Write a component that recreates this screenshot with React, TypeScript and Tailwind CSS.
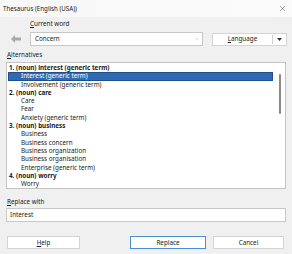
import { X, ChevronDown } from "lucide-react";

type Row = { text: string; head?: boolean; selected?: boolean };

const rows: Row[] = [
  { text: "1. (noun) interest (generic term)", head: true },
  { text: "Interest (generic term)", selected: true },
  { text: "Involvement (generic term)" },
  { text: "2. (noun) care", head: true },
  { text: "Care" },
  { text: "Fear" },
  { text: "Anxiety (generic term)" },
  { text: "3. (noun) business", head: true },
  { text: "Business" },
  { text: "Business concern" },
  { text: "Business organization" },
  { text: "Business organisation" },
  { text: "Enterprise (generic term)" },
  { text: "4. (noun) worry", head: true },
  { text: "Worry" },
];

const Underlined = ({ first, rest }: { first: string; rest: string }) => (
  <span>
    <span className="underline underline-offset-1">{first}</span>
    {rest}
  </span>
);

const App = () => {
  return (
    <div
      className="w-[292px] h-[254px] bg-[#f0f0f0] text-[#1a1a1a] text-[6.3px] leading-[8px] overflow-hidden"
      style={{ fontFamily: '"Noto Sans", "Open Sans", sans-serif' }}
    >
      {/* title bar */}
      <div className="h-[17px] flex items-center justify-between pl-[3px] pr-[5px] bg-gradient-to-r from-[#f7f7f7] to-[#fbfbfb]">
        <span className="text-[6.2px]">Thesaurus (English (USA))</span>
        <X size={9} strokeWidth={1.2} className="text-[#444]" />
      </div>

      {/* current word */}
      <div className="pl-[30px] mt-[3px]">
        <Underlined first="C" rest="urrent word" />
      </div>
      <div className="flex items-center mt-[4px] h-[14px]">
        <div className="w-[30px] flex justify-center pl-[1px]">
          <svg width="10" height="8" viewBox="0 0 10 8">
            <path d="M0 4 L4 0 V2.5 H10 V5.5 H4 V8 Z" fill="#a8a8a8" />
          </svg>
        </div>
        <div className="w-[173px] h-[14px] bg-white border border-[#c8c8c8] flex items-center justify-between pl-[4px] pr-[2px]">
          <span>Concern</span>
          <ChevronDown size={6} strokeWidth={1.5} className="text-[#999]" />
        </div>
        <div className="ml-[9px] w-[75px] h-[13px] bg-white border border-[#d4d4d4] flex items-center">
          <div className="flex-1 text-center">
            <Underlined first="L" rest="anguage" />
          </div>
          <div className="w-px h-[9px] bg-[#d0d0d0]" />
          <div className="w-[13px] flex justify-center">
            <svg width="5" height="3" viewBox="0 0 5 3">
              <path d="M0 0 H5 L2.5 3 Z" fill="#333" />
            </svg>
          </div>
        </div>
      </div>

      {/* alternatives */}
      <div className="pl-[7px] mt-[5px]">
        <Underlined first="A" rest="lternatives" />
      </div>
      <div className="mx-[6px] mt-[3px] h-[127px] bg-white border border-[#c4c4c4] flex">
        <div className="flex-1 pt-[1px] pl-[1px]">
          {rows.map((r, i) => (
            <div
              key={i}
              className={
                "h-[8.3px] leading-[8.3px] whitespace-nowrap " +
                (r.head ? "font-bold pl-[1px] " : "pl-[13px] ") +
                (r.selected ? "bg-[#2f6bb3] text-white shadow-[inset_0_0_0_1px_#1e4f8c] mr-[2px]" : "")
              }
            >
              {r.text}
            </div>
          ))}
        </div>
        <div className="w-[10px] flex justify-center pt-[11px]">
          <div className="w-[2px] h-[40px] bg-[#8a8a8a] rounded-full" />
        </div>
      </div>

      {/* replace with */}
      <div className="pl-[7px] mt-[9px]">
        <Underlined first="R" rest="eplace with" />
      </div>
      <div className="mx-[6px] mt-[2px] h-[14px] bg-white border border-[#c8c8c8] flex items-center pl-[3px]">
        Interest
      </div>

      {/* buttons */}
      <div className="flex items-center mt-[14px] px-[7px] h-[13px]">
        <div className="w-[73px] h-[13px] bg-white border border-[#d4d4d4] flex items-center justify-center">
          <Underlined first="H" rest="elp" />
        </div>
        <div className="ml-[50px] w-[76px] h-[13px] bg-white border border-[#4a8fd6] flex items-center justify-center">
          Replace
        </div>
        <div className="ml-[7px] w-[71px] h-[13px] bg-white border border-[#d4d4d4] flex items-center justify-center">
          Cancel
        </div>
      </div>
    </div>
  );
};

export default App;
